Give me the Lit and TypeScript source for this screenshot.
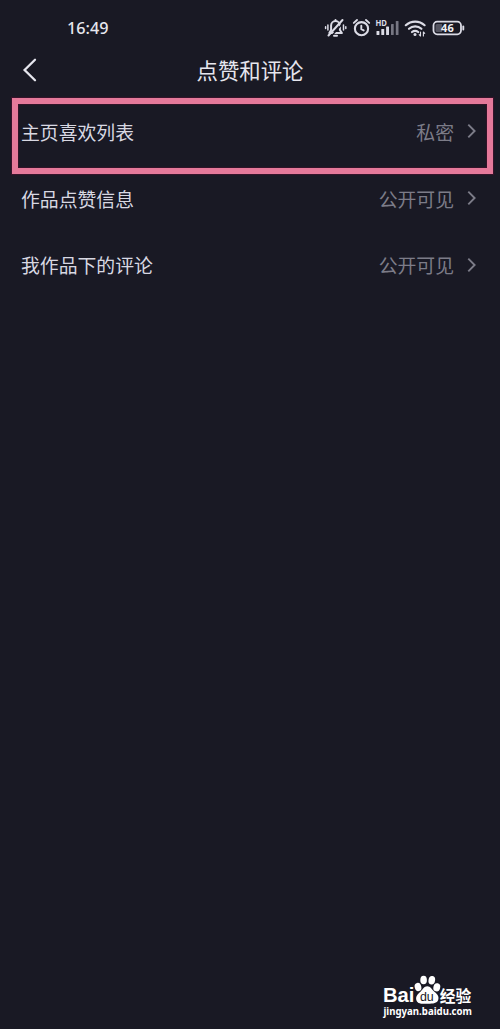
import { LitElement, html, css } from "lit";
import { customElement, property } from "lit/decorators.js";

@customElement("status-bar")
class StatusBar extends LitElement {
  static styles = css`
    :host { display: block; height: 28px; padding: 14px 35px 0 67px; }
    .bar { display: flex; align-items: center; justify-content: space-between; height: 28px; }
    .time { font: 500 16.200px/28px "Noto Sans", sans-serif; color: #e6e6ee; }
    svg { display: block; }
  `;
  render() {
    return html`<div class="bar">
      <span class="time">16:49</span>
      <svg width="142" height="28" viewBox="323 14 142 28" fill="none" stroke="#dcdce6" stroke-width="1.8" stroke-linecap="round" stroke-linejoin="round">
        <path d="M329.300 33h12.600l-2-3v-4.500a4.400 4.400 0 0 0-8.800 0v4.500zM334 35.800h3M335.500 20.500v-.5" stroke-width="2" />
        <path d="M344 22L332 35.500" stroke="#191924" stroke-width="1.300" />
        <path d="M342.500 20L328.500 35.500" stroke-width="2" />
        <path d="M327.900 25v5M325.600 26.700v1.800M343.500 25v5M345.800 26.700v1.800" stroke-width="1.500" />
        <circle cx="361.500" cy="28.700" r="6.600" stroke-width="2.100" />
        <path d="M361.300 25.700v3.500l2.400 1.200M353.800 22.900l3.200-2.900M369.200 22.900L366 20" stroke-width="1.900" />
        <g fill="#dcdce6" stroke="none">
          <text x="375.500" y="26" font-family="Noto Sans, sans-serif" font-size="8" font-weight="700" textLength="11.500" lengthAdjust="spacingAndGlyphs">HD</text>
          <rect x="376.500" y="31" width="2.900" height="4" rx=".6" />
          <rect x="381.300" y="29" width="2.900" height="6" rx=".6" />
          <rect x="386.100" y="26.500" width="2.900" height="8.500" rx=".6" />
          <rect x="391" y="24" width="2.700" height="11" rx=".6" fill="#777783" />
          <rect x="395.800" y="21" width="2.700" height="14" rx=".6" fill="#777783" />
        </g>
        <path d="M405.800 25.200a14 14 0 0 1 18.800 0M409 28.800a9.300 9.300 0 0 1 12.400 0M412 32a5 5 0 0 1 6.200 0" stroke-width="2.200" />
        <circle cx="415" cy="34.500" r="1.500" fill="#dcdce6" stroke="none" />
        <path d="M420.500 32v4l-1.300-1.300M423.400 36v-4l1.300 1.300" stroke-width="1.100" />
        <rect x="433.500" y="21.700" width="27.500" height="12.600" rx="3.700" stroke-width="1.800" />
        <path d="M437 24h5v8h-5a1.500 1.500 0 0 1-1.500-1.500v-5a1.500 1.500 0 0 1 1.500-1.500z" fill="#555561" stroke="none" />
        <path d="M463.300 26.500v3" stroke-width="1.900" />
        <text x="447.400" y="32.100" text-anchor="middle" fill="#f0f0f6" stroke="none" font-family="Noto Sans, sans-serif" font-size="11" font-weight="700">46</text>
      </svg>
    </div>`;
  }
}

@customElement("setting-row")
class SettingRow extends LitElement {
  @property() label = "";
  @property() value = "";
  static styles = css`
    :host { display: block; }
    .row {
      display: flex; align-items: center; height: 66.700px; padding: 0 23px 0 21px;
      font: 400 18.850px/28px "Noto Sans CJK SC", sans-serif;
    }
    .label { flex: 1; color: #d8d8e2; }
    .value { color: #7c7c88; margin-right: 12px; }
    svg { display: block; margin-top: -1px; }
  `;
  render() {
    return html`<div class="row">
      <span class="label">${this.label}</span>
      <span class="value">${this.value}</span>
      <svg width="11" height="16" viewBox="0 0 11 16" fill="none" stroke="#7c7c88" stroke-width="1.900"><path d="M2.300 1.700L8.600 8L2.300 14.300" /></svg>
    </div>`;
  }
}

@customElement("site-mark")
class SiteMark extends LitElement {
  static styles = css`
    :host { display: block; width: 94px; height: 46px; }
    svg { display: block; overflow: visible; }
  `;
  render() {
    return html`<svg width="94" height="46" viewBox="381 973 94 46" fill="#fff">
      <text x="383" y="1002.300" font-family="Liberation Sans, sans-serif" font-size="20" font-weight="700" textLength="31.500" lengthAdjust="spacingAndGlyphs">Bai</text>
      <ellipse cx="418" cy="987" rx="3.300" ry="4.200" transform="rotate(-15 418 987)" />
      <ellipse cx="423.600" cy="980" rx="3.300" ry="4.300" />
      <ellipse cx="431.800" cy="980.200" rx="3.300" ry="4.300" transform="rotate(10 431.800 980.200)" />
      <ellipse cx="436.800" cy="987.300" rx="3.400" ry="4.100" transform="rotate(15 436.800 987.300)" />
      <path d="M427.300 986.300c3.200 0 4.300 3 6.800 5.200 2.500 2.100 5 4 4.300 7.600-.7 3.800-4 5-11.200 4.600-6.600.5-10.400-.5-11-4.300-.5-3.500 2-5.600 4.500-7.900 2.300-2.200 3.300-5.200 6.600-5.200z" />
      <text x="419.900" y="1001" fill="#191924" font-family="Liberation Sans, sans-serif" font-size="13" font-weight="400" textLength="13.800" lengthAdjust="spacingAndGlyphs">du</text>
      <text x="439.800" y="1001.800" font-family="Noto Sans CJK SC, sans-serif" font-size="16" font-weight="700" textLength="31.500" lengthAdjust="spacingAndGlyphs">经验</text>
      <text x="383.500" y="1014.500" font-family="Noto Sans, sans-serif" font-size="11" font-weight="700" textLength="88.500" lengthAdjust="spacingAndGlyphs">jingyan.baidu.com</text>
    </svg>`;
  }
}

@customElement("app-root")
class AppRoot extends LitElement {
  static styles = css`
    :host { display: block; }
    .page {
      box-sizing: border-box; position: relative; display: flex; flex-direction: column;
      height: 1029px; background: #191924; overflow: hidden;
    }
    .header { display: grid; grid-template-columns: 60px 1fr 60px; align-items: center; height: 56.500px; }
    .title { text-align: center; color: #e6e6ee; font: 400 21.400px/32px "Noto Sans CJK SC", sans-serif; }
    .back { display: block; margin-left: 21px; }
    .frame {
      position: absolute; left: 12px; top: 98px; width: 481px; height: 76px;
      box-sizing: border-box; border: 6px solid #e5799a; box-shadow: 0 0 1px 1px #35142a, inset 0 0 1px 1px #35142a;
    }
    .mark { margin: auto 25px 10px auto; }
  `;
  render() {
    return html`<main class="page">
      <status-bar></status-bar>
      <header class="header">
        <svg class="back" width="18" height="26" viewBox="0 0 18 26" fill="none" stroke="#e6e6ee" stroke-width="2.300" stroke-linecap="round"><path d="M14 2.800L3.600 13L14 23.200" /></svg>
        <div class="title">点赞和评论</div>
      </header>
      <section>
        <setting-row label="主页喜欢列表" value="私密"></setting-row>
        <setting-row label="作品点赞信息" value="公开可见"></setting-row>
        <setting-row label="我作品下的评论" value="公开可见"></setting-row>
      </section>
      <site-mark class="mark"></site-mark>
      <div class="frame"></div>
    </main>`;
  }
}
